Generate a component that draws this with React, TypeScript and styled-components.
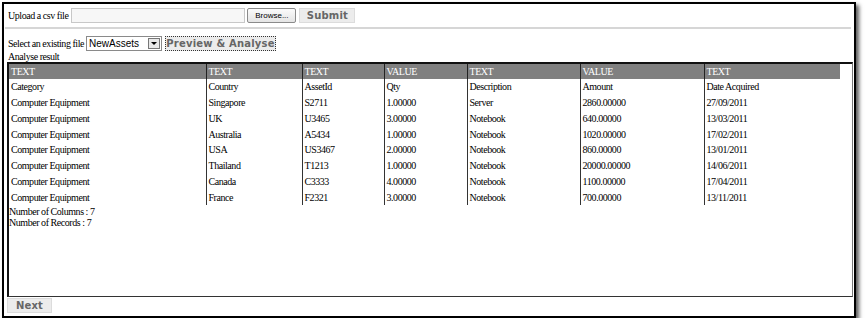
import React from "react";
import styled, { createGlobalStyle } from "styled-components";

const GlobalStyle = createGlobalStyle`
  html, body {
    margin: 0;
    padding: 0;
    background: #fff;
  }
  body {
    font-family: "Liberation Serif", "Times New Roman", serif;
    font-size: 10px;
    letter-spacing: -0.45px;
    color: #000;
  }
`;

const Frame = styled.div`
  margin: 2px 0 0 2px;
  width: 850px;
  height: 312px;
  border: 2px solid #000;
  box-shadow: 3px 3px 4px rgba(0, 0, 0, 0.65);
  display: flex;
  flex-direction: column;
  background: #fff;
`;

const Row = styled.div<{ $top: number }>`
  display: flex;
  align-items: center;
  height: 15px;
  margin: ${(p) => p.$top}px 0 0 4px;
`;

const Label = styled.span`
  font-size: 10px;
  white-space: nowrap;
`;

const FileBox = styled.div`
  width: 172px;
  height: 13px;
  margin-left: 3px;
  border: 1px solid #c8c8c8;
  background: #f7f7f7;
`;

const BrowseButton = styled.div`
  margin-left: 2px;
  width: 47px;
  height: 13px;
  border: 1px solid #8a8a8a;
  border-radius: 2px;
  background: linear-gradient(#fbfbfb, #e4e4e4);
  font-family: "Liberation Sans", Arial, sans-serif;
  font-size: 8px;
  letter-spacing: 0;
  display: flex;
  align-items: center;
  justify-content: center;
`;

const GrayButton = styled.div<{ $w: number; $dotted?: boolean }>`
  width: ${(p) => p.$w}px;
  height: 15px;
  box-sizing: border-box;
  background: #ececec;
  border: 1px ${(p) => (p.$dotted ? "dotted #333" : "solid #dcdcdc")};
  color: #666;
  font-family: "DejaVu Sans", "Liberation Sans", sans-serif;
  font-weight: bold;
  font-size: 10px;
  letter-spacing: 0.2px;
  display: flex;
  align-items: center;
  justify-content: center;
`;

const Divider = styled.div`
  margin: 4px 0 0 1px;
  width: 846px;
  height: 2px;
  background: #d6d6d6;
`;

const SelectBox = styled.div`
  margin-left: 2px;
  width: 76px;
  height: 15px;
  box-sizing: border-box;
  border: 1px solid #8a8a8a;
  display: flex;
  align-items: center;
  justify-content: space-between;
  font-family: "Liberation Sans", Arial, sans-serif;
  font-size: 10px;
  letter-spacing: 0;
  padding-left: 2px;
  background: #fff;
`;

const SelectArrow = styled.div`
  width: 12px;
  height: 11px;
  margin-right: 1px;
  border: 1px solid #777;
  box-sizing: border-box;
  background: #e8e8e8;
  display: flex;
  align-items: center;
  justify-content: center;
  &::after {
    content: "";
    border-left: 3px solid transparent;
    border-right: 3px solid transparent;
    border-top: 3px solid #000;
  }
`;

const Caption = styled.div`
  margin: 0 0 0 4px;
  height: 11px;
  line-height: 12px;
  font-size: 10px;
`;

const Panel = styled.div`
  margin: 0 0 0 3px;
  width: 843px;
  height: 232px;
  border-top: 2px solid #111;
  border-left: 2px solid #111;
  border-right: 1px solid #777;
  border-bottom: 1px solid #333;
  display: flex;
  flex-direction: column;
`;

const Table = styled.table`
  border-collapse: collapse;
  width: 831px;
  table-layout: fixed;
  font-family: "Liberation Serif", "Times New Roman", serif;
  font-size: 10px;
`;

const HeadCell = styled.th<{ $first?: boolean }>`
  background: #808080;
  color: #fff;
  font-weight: normal;
  text-align: left;
  height: 14px;
  padding: 0 0 1px 2px;
  line-height: 13px;
  border-left: ${(p) => (p.$first ? "none" : "1px solid #222")};
`;

const Cell = styled.td<{ $first?: boolean }>`
  height: 15.75px;
  padding: 0 0 0 2px;
  line-height: 15px;
  white-space: nowrap;
  border-left: ${(p) => (p.$first ? "none" : "1px solid #333")};
`;

const Stat = styled.div<{ $gap?: number }>`
  margin-top: ${(p) => p.$gap ?? 0}px;
  font-size: 10px;
  line-height: 11px;
`;

const Footer = styled.div`
  margin: 1px 0 0 3px;
`;

const columns = [
  { type: "TEXT", w: 197 },
  { type: "TEXT", w: 96 },
  { type: "TEXT", w: 82 },
  { type: "VALUE", w: 83 },
  { type: "TEXT", w: 113 },
  { type: "VALUE", w: 124 },
  { type: "TEXT", w: 136 },
];

const rows = [
  ["Category", "Country", "AssetId", "Qty", "Description", "Amount", "Date Acquired"],
  ["Computer Equipment", "Singapore", "S2711", "1.00000", "Server", "2860.00000", "27/09/2011"],
  ["Computer Equipment", "UK", "U3465", "3.00000", "Notebook", "640.00000", "13/03/2011"],
  ["Computer Equipment", "Australia", "A5434", "1.00000", "Notebook", "1020.00000", "17/02/2011"],
  ["Computer Equipment", "USA", "US3467", "2.00000", "Notebook", "860.00000", "13/01/2011"],
  ["Computer Equipment", "Thailand", "T1213", "1.00000", "Notebook", "20000.00000", "14/06/2011"],
  ["Computer Equipment", "Canada", "C3333", "4.00000", "Notebook", "1100.00000", "17/04/2011"],
  ["Computer Equipment", "France", "F2321", "3.00000", "Notebook", "700.00000", "13/11/2011"],
];

const App: React.FC = () => {
  return (
    <>
      <GlobalStyle />
      <Frame>
        <Row $top={4}>
          <Label>Upload a csv file</Label>
          <FileBox />
          <BrowseButton>Browse...</BrowseButton>
          <GrayButton $w={56} style={{ marginLeft: 3 }}>
            Submit
          </GrayButton>
        </Row>
        <Divider />
        <Row $top={7}>
          <Label>Select an existing file</Label>
          <SelectBox>
            NewAssets
            <SelectArrow />
          </SelectBox>
          <GrayButton $w={111} $dotted style={{ marginLeft: 3 }}>
            Preview &amp; Analyse
          </GrayButton>
        </Row>
        <Caption>Analyse result</Caption>
        <Panel>
          <Table>
            <colgroup>
              {columns.map((c, i) => (
                <col key={i} style={{ width: c.w }} />
              ))}
            </colgroup>
            <thead>
              <tr>
                {columns.map((c, i) => (
                  <HeadCell key={i} $first={i === 0}>
                    {c.type}
                  </HeadCell>
                ))}
              </tr>
            </thead>
            <tbody>
              {rows.map((r, ri) => (
                <tr key={ri}>
                  {r.map((v, ci) => (
                    <Cell key={ci} $first={ci === 0}>
                      {v}
                    </Cell>
                  ))}
                </tr>
              ))}
            </tbody>
          </Table>
          <Stat $gap={1}>Number of Columns : 7</Stat>
          <Stat>Number of Records : 7</Stat>
        </Panel>
        <Footer>
          <GrayButton $w={45}>Next</GrayButton>
        </Footer>
      </Frame>
    </>
  );
};

export default App;
